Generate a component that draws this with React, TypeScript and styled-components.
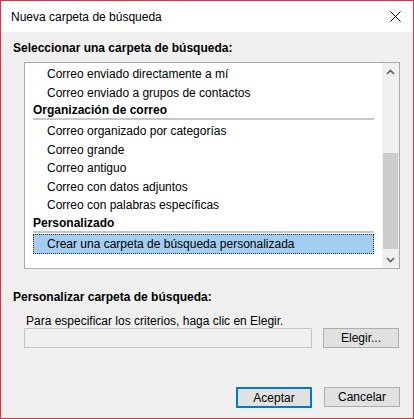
import styled, { createGlobalStyle } from "styled-components";

const GlobalStyle = createGlobalStyle`
  body {
    margin: 0;
    font-family: "Segoe UI", "Liberation Sans", Arial, sans-serif;
    font-size: 12px;
    color: #000;
  }
`;

const Window = styled.div`
  width: 414px;
  height: 419px;
  box-sizing: border-box;
  border: 1px solid #e0304a;
  background: #f0f0f0;
  display: flex;
  flex-direction: column;
`;

const TitleBar = styled.div`
  height: 31px;
  background: #fff;
  display: flex;
  align-items: center;
  justify-content: space-between;
  padding: 0 12px 0 10px;
`;

const TitleText = styled.span`
  font-size: 12px;
  line-height: 16px;
`;

const Body = styled.div`
  flex: 1;
  display: flex;
  flex-direction: column;
  padding: 8px 13px 10px 12px;
`;

const SectionLabel = styled.div<{ $top?: number }>`
  font-weight: bold;
  line-height: 16px;
  margin-top: ${(p) => p.$top ?? 0}px;
`;

const ListBox = styled.div`
  margin: 6px 0 0 11px;
  height: 207px;
  box-sizing: border-box;
  border: 1px solid #a9a9a9;
  background: #fff;
  display: flex;
`;

const List = styled.div`
  flex: 1;
  padding-top: 2px;
  overflow: hidden;
`;

const Item = styled.div<{ $selected?: boolean }>`
  margin: ${(p) => (p.$selected ? "-1px 8px 0" : "0 8px")};
  height: ${(p) => (p.$selected ? "20px" : "18.5px")};
  box-sizing: border-box;
  padding-left: 13px;
  display: flex;
  align-items: center;
  white-space: nowrap;
  background: ${(p) => (p.$selected ? "#a4cdf2" : "transparent")};
  border: 1px dotted ${(p) => (p.$selected ? "#2a2a2a" : "transparent")};
`;

const GroupHeader = styled.div`
  margin: 0 8px 2px;
  height: 16px;
  font-weight: bold;
  display: flex;
  align-items: center;
  border-bottom: 2px solid #c8c8c8;
`;

const ScrollBar = styled.div`
  width: 17px;
  background: #f0f0f0;
  display: flex;
  flex-direction: column;
`;

const ArrowBox = styled.div`
  height: 17px;
  display: flex;
  align-items: center;
  justify-content: center;
`;

const Track = styled.div`
  flex: 1;
  display: flex;
  flex-direction: column;
  padding: 73px 1px 2px;
`;

const Thumb = styled.div`
  flex: 1;
  background: #cdcdcd;
`;

const Hint = styled.div`
  line-height: 13px;
  margin: 10px 0 0 13px;
`;

const FieldRow = styled.div`
  display: flex;
  gap: 11px;
  margin-left: 11px;
`;

const Field = styled.div`
  width: 288px;
  height: 20px;
  box-sizing: border-box;
  border: 1px solid #c5c5c5;
  background: #f0f0f0;
`;

const Button = styled.button<{ $default?: boolean }>`
  width: 76px;
  height: ${(p) => (p.$default ? "21px" : "20px")};
  box-sizing: border-box;
  font: inherit;
  color: #000;
  background: #e1e1e1;
  border: ${(p) => (p.$default ? "2px solid #0078d7" : "1px solid #adadad")};
  padding: 0;
  display: flex;
  align-items: center;
  justify-content: center;
`;

const Footer = styled.div`
  margin-top: auto;
  display: flex;
  justify-content: flex-end;
  gap: 12px;
`;

const Chevron = ({ up }: { up?: boolean }) => (
  <svg width="9" height="6" viewBox="0 0 9 6">
    <path
      d={up ? "M1 5 L4.5 1.5 L8 5" : "M1 1 L4.5 4.5 L8 1"}
      fill="none"
      stroke="#606060"
      strokeWidth="1.6"
    />
  </svg>
);

function App() {
  return (
    <>
      <GlobalStyle />
      <Window>
        <TitleBar>
          <TitleText>Nueva carpeta de búsqueda</TitleText>
          <svg width="11" height="11" viewBox="0 0 11 11">
            <path d="M0.5 0.5 L10.5 10.5 M10.5 0.5 L0.5 10.5" stroke="#000" strokeWidth="1" />
          </svg>
        </TitleBar>
        <Body>
          <SectionLabel>Seleccionar una carpeta de búsqueda:</SectionLabel>
          <ListBox>
            <List>
              <Item>Correo enviado directamente a mí</Item>
              <Item>Correo enviado a grupos de contactos</Item>
              <GroupHeader>Organización de correo</GroupHeader>
              <Item>Correo organizado por categorías</Item>
              <Item>Correo grande</Item>
              <Item>Correo antiguo</Item>
              <Item>Correo con datos adjuntos</Item>
              <Item>Correo con palabras específicas</Item>
              <GroupHeader>Personalizado</GroupHeader>
              <Item $selected>Crear una carpeta de búsqueda personalizada</Item>
            </List>
            <ScrollBar>
              <ArrowBox>
                <Chevron up />
              </ArrowBox>
              <Track>
                <Thumb />
              </Track>
              <ArrowBox>
                <Chevron />
              </ArrowBox>
            </ScrollBar>
          </ListBox>
          <SectionLabel $top={20}>Personalizar carpeta de búsqueda:</SectionLabel>
          <Hint>Para especificar los criterios, haga clic en Elegir.</Hint>
          <FieldRow>
            <Field />
            <Button>Elegir...</Button>
          </FieldRow>
          <Footer>
            <Button $default>Aceptar</Button>
            <Button>Cancelar</Button>
          </Footer>
        </Body>
      </Window>
    </>
  );
}

export default App;
